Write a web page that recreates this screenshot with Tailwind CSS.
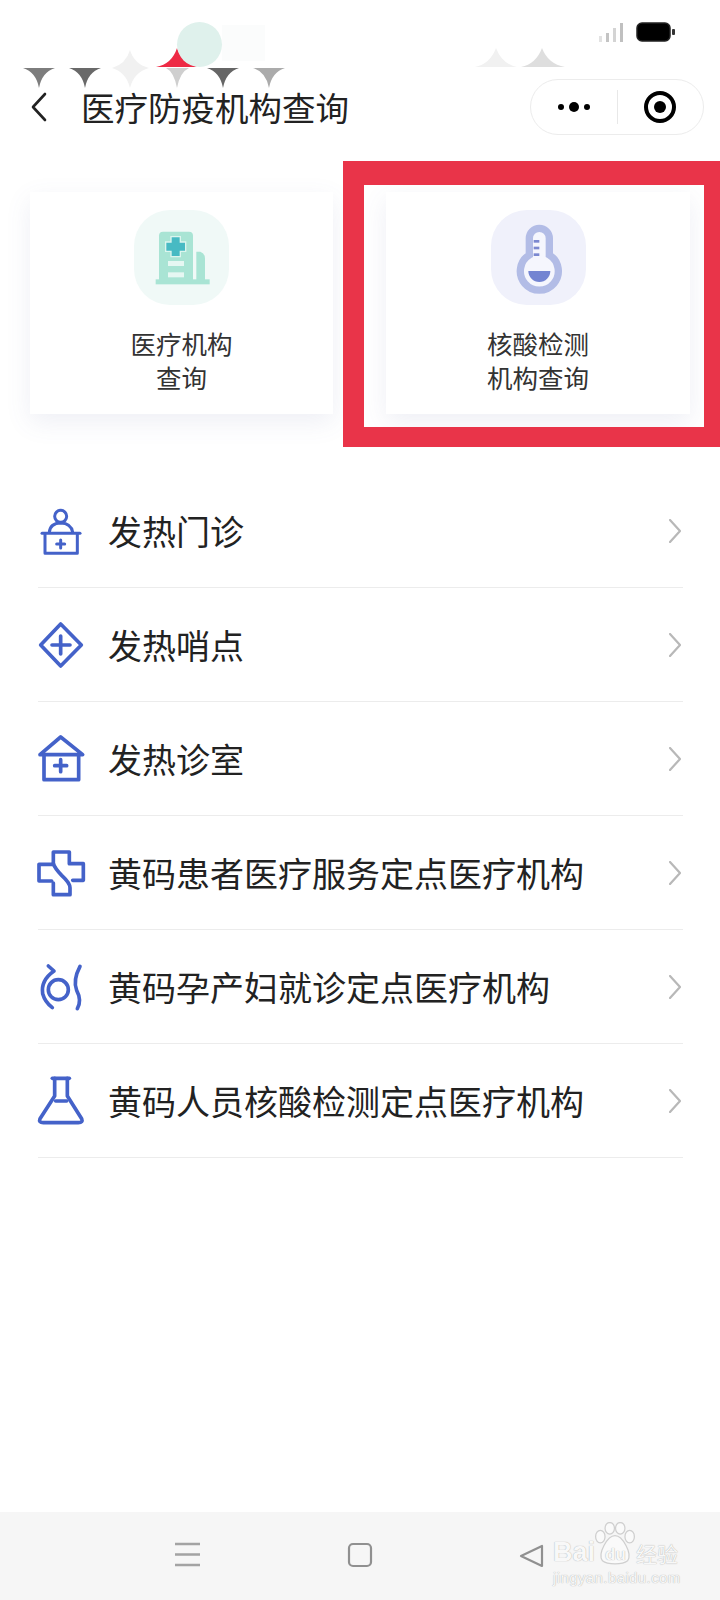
<!DOCTYPE html>
<html lang="zh">
<head>
<meta charset="utf-8">
<script src="https://cdn.jsdelivr.net/npm/@tailwindcss/browser@4"></script>
</head>
<body class="bg-white">
<div class="relative w-[720px] h-[1600px] overflow-hidden bg-white text-[#222] font-['Noto_Sans_CJK_SC','Noto_Sans',sans-serif]">

  <!-- status bar -->
  <div class="relative h-[79px] flex justify-end items-start pt-[22px] pr-[45px] gap-[12px]">
    <svg class="absolute left-0 top-0" width="720" height="90" viewBox="0 0 720 90">
      <rect x="222" y="25" width="43" height="36" fill="#fbfcfc"/>
      <path d="M23 68H55Q42 72 39 88Q36 72 23 68Z" fill="#7d7d7d"/>
      <path d="M69 68H101Q88 72 85 88Q82 72 69 68Z" fill="#696969"/>
      <path d="M112 68Q126 64 130 50Q134 64 149 68Q134 72 130 88Q126 72 112 68Z" fill="#f1f1f1"/>
      <path d="M156 67Q172 64 177 48Q181 62 197 67Z" fill="#ee2a45"/>
      <path d="M166 68H189Q180 72 177 88Q174 72 166 68Z" fill="#cfcfcf"/>
      <path d="M207 68H239Q226 72 223 88Q220 72 207 68Z" fill="#666"/>
      <path d="M253 68H285Q272 72 269 88Q266 72 253 68Z" fill="#ababab"/>
      <path d="M475 67Q490 64 496 48Q502 64 517 67Z" fill="#f1f1f1"/>
      <path d="M521 67Q536 64 542 48Q548 64 565 67Z" fill="#dedede"/>
      <circle cx="199.5" cy="44.5" r="22.5" fill="#dff1ec"/>
    </svg>
    <svg class="relative" width="26" height="21" viewBox="0 0 26 21">
      <rect x="1" y="14" width="3" height="6" fill="#e2e2e2"/>
      <rect x="8" y="11" width="3" height="9" fill="#c4c4c4"/>
      <rect x="15" y="6" width="3" height="14" fill="#d4d4d4"/>
      <rect x="22" y="1" width="3" height="19" fill="#c0c0c0"/>
    </svg>
    <svg class="relative" width="39" height="20" viewBox="0 0 39 20">
      <rect x="1" y="1" width="33" height="18" rx="5" fill="#000" stroke="#222" stroke-width="1.5"/>
      <rect x="36" y="7" width="3" height="6" rx="1" fill="#333"/>
    </svg>
  </div>

  <!-- nav bar -->
  <div class="relative h-[56px] flex items-center pl-[30px] pr-[16px]">
    <svg width="18" height="30" viewBox="0 0 18 30" fill="none" stroke="#222" stroke-width="2.6" stroke-linecap="round" stroke-linejoin="round">
      <path d="M15 2L3 15L15 28"/>
    </svg>
    <div class="ml-[33px] text-[33.5px] leading-none whitespace-nowrap">医疗防疫机构查询</div>
    <div class="ml-auto w-[174px] h-[56px] rounded-full border border-[#ececec] flex items-center bg-white">
      <div class="flex-1 flex items-center justify-center gap-[5px]">
        <span class="w-[6px] h-[6px] rounded-full bg-black"></span>
        <span class="w-[10px] h-[10px] rounded-full bg-black"></span>
        <span class="w-[6px] h-[6px] rounded-full bg-black"></span>
      </div>
      <div class="w-px h-[34px] bg-[#e8e8e8]"></div>
      <div class="flex-1 flex items-center justify-center">
        <div class="w-[32px] h-[32px] rounded-full border-[4px] border-black flex items-center justify-center">
          <span class="w-[12px] h-[12px] rounded-full bg-black"></span>
        </div>
      </div>
    </div>
  </div>

  <!-- cards -->
  <div class="flex mt-[57px] pl-[30px] gap-[53px]">
    <div class="w-[303px] h-[222px] bg-white shadow-[0_8px_24px_rgba(90,100,160,0.10)] flex flex-col items-center pt-[18px]">
      <div class="w-[95px] h-[95px] rounded-[36px] bg-[#f0f9f7]">
        <svg width="95" height="95" viewBox="45 30 285 285">
          <path d="M120 240V107Q120 95 132 95H210Q222 95 222 107V240Z" fill="#a9e4d4"/>
          <path d="M232 240V155H244Q258 160 258 175V240Z" fill="#a9e4d4"/>
          <rect x="110" y="238" width="162" height="15" fill="#a9e4d4"/>
          <path d="M158 112H182V128H198V152H182V168H158V152H142V128H158Z" fill="#47bac3" stroke="#dcf5ee" stroke-width="8" paint-order="stroke"/>
          <rect x="147" y="183" width="48" height="15" fill="#e6f7f2"/>
          <rect x="147" y="217" width="48" height="15" fill="#e6f7f2"/>
        </svg>
      </div>
      <div class="mt-[21px] text-[25.5px] leading-[34px] text-center text-[#333]">医疗机构<br>查询</div>
    </div>
    <div class="relative w-[304px] h-[222px] bg-white shadow-[0_8px_24px_rgba(90,100,160,0.10)] flex flex-col items-center pt-[18px]">
      <div class="w-[95px] h-[95px] rounded-[36px] bg-[#f0f1fb]">
        <svg width="95" height="95" viewBox="30 30 285 285">
          <path d="M145 165V115A30 30 0 0 1 205 115V165A57 57 0 1 1 145 165Z" fill="#f5f6fd" stroke="#b2bce6" stroke-width="22"/>
          <rect x="158" y="120" width="17" height="8" fill="#7b88d0"/>
          <rect x="158" y="140" width="17" height="8" fill="#7b88d0"/>
          <rect x="158" y="160" width="17" height="8" fill="#7b88d0"/>
          <path d="M142 213H208A33 33 0 0 1 142 213Z" fill="#7384d2"/>
        </svg>
      </div>
      <div class="mt-[21px] text-[25.5px] leading-[34px] text-center text-[#333]">核酸检测<br>机构查询</div>
      <div class="absolute left-[-43px] top-[-31px] w-[377px] h-[286px] border-solid border-[#e93449] border-t-[24px] border-l-[21px] border-r-[16px] border-b-[20px]"></div>
    </div>
  </div>

  <!-- list -->
  <div class="mt-[60px] ml-[38px] w-[645px]">
    <div class="h-[114px] flex items-center border-b border-[#ececec]">
      <svg class="-ml-[2px]" width="50" height="50" viewBox="48 46 150 150" fill="none" stroke="#4462c9" stroke-width="9" stroke-linecap="round" stroke-linejoin="round">
        <circle cx="122" cy="77" r="18"/>
        <path d="M88 125Q90 98 122 97Q154 98 158 125"/>
        <path d="M66 128H180"/>
        <path d="M75 130V188H172V130"/>
        <path d="M110 160H134M122 148V172"/>
      </svg>
      <div class="ml-[22px] text-[34px] leading-none whitespace-nowrap">发热门诊</div>
      <svg class="ml-auto mr-[2px]" width="12" height="24" viewBox="0 0 12 24" fill="none" stroke="#b8b8b8" stroke-width="2.2" stroke-linecap="round" stroke-linejoin="round"><path d="M1 1L11 12L1 23"/></svg>
    </div>
    <div class="h-[114px] flex items-center border-b border-[#ececec]">
      <svg class="-ml-[2px]" width="50" height="50" viewBox="48 390 150 150" fill="none" stroke="#4462c9" stroke-width="11" stroke-linecap="round" stroke-linejoin="round">
        <path d="M122 402L184 465L122 528L62 465Z"/>
        <path d="M96 465H150M122 438V492"/>
      </svg>
      <div class="ml-[22px] text-[34px] leading-none whitespace-nowrap">发热哨点</div>
      <svg class="ml-auto mr-[2px]" width="12" height="24" viewBox="0 0 12 24" fill="none" stroke="#b8b8b8" stroke-width="2.2" stroke-linecap="round" stroke-linejoin="round"><path d="M1 1L11 12L1 23"/></svg>
    </div>
    <div class="h-[114px] flex items-center border-b border-[#ececec]">
      <svg class="-ml-[2px]" width="50" height="50" viewBox="48 733 150 150" fill="none" stroke="#4462c9" stroke-width="11" stroke-linecap="round" stroke-linejoin="round">
        <path d="M60 795L122 742L188 795Z"/>
        <path d="M72 795V870H176V795"/>
        <path d="M104 828H140M122 810V846"/>
      </svg>
      <div class="ml-[22px] text-[34px] leading-none whitespace-nowrap">发热诊室</div>
      <svg class="ml-auto mr-[2px]" width="12" height="24" viewBox="0 0 12 24" fill="none" stroke="#b8b8b8" stroke-width="2.2" stroke-linecap="round" stroke-linejoin="round"><path d="M1 1L11 12L1 23"/></svg>
    </div>
    <div class="h-[114px] flex items-center border-b border-[#ececec]">
      <svg class="-ml-[2px]" width="50" height="50" viewBox="48 53 150 150" fill="none" stroke="#4462c9" stroke-width="11" stroke-linecap="round" stroke-linejoin="round">
        <path d="M95 152H57V102H100V65H148V100H190V150H158"/>
        <path d="M100 100Q105 115 125 135Q150 158 150 172V193H100V158"/>
      </svg>
      <div class="ml-[22px] text-[34px] leading-none whitespace-nowrap">黄码患者医疗服务定点医疗机构</div>
      <svg class="ml-auto mr-[2px]" width="12" height="24" viewBox="0 0 12 24" fill="none" stroke="#b8b8b8" stroke-width="2.2" stroke-linecap="round" stroke-linejoin="round"><path d="M1 1L11 12L1 23"/></svg>
    </div>
    <div class="h-[114px] flex items-center border-b border-[#ececec]">
      <svg class="-ml-[2px]" width="50" height="50" viewBox="48 395 150 150" fill="none" stroke="#4462c9" stroke-width="11" stroke-linecap="round" stroke-linejoin="round">
        <circle cx="115" cy="478" r="30"/>
        <path d="M85 407L102 422Q62 450 68 490Q75 515 97 532"/>
        <path d="M180 408Q158 450 170 480Q186 510 172 535"/>
      </svg>
      <div class="ml-[22px] text-[34px] leading-none whitespace-nowrap">黄码孕产妇就诊定点医疗机构</div>
      <svg class="ml-auto mr-[2px]" width="12" height="24" viewBox="0 0 12 24" fill="none" stroke="#b8b8b8" stroke-width="2.2" stroke-linecap="round" stroke-linejoin="round"><path d="M1 1L11 12L1 23"/></svg>
    </div>
    <div class="h-[114px] flex items-center border-b border-[#ececec]">
      <svg class="-ml-[2px]" width="50" height="50" viewBox="48 740 150 150" fill="none" stroke="#4462c9" stroke-width="11" stroke-linecap="round" stroke-linejoin="round">
        <path d="M97 747H148"/>
        <path d="M104 747V800L60 868Q55 880 70 880H175Q190 880 185 868L142 800V747"/>
        <path d="M107 815H140"/>
      </svg>
      <div class="ml-[22px] text-[34px] leading-none whitespace-nowrap">黄码人员核酸检测定点医疗机构</div>
      <svg class="ml-auto mr-[2px]" width="12" height="24" viewBox="0 0 12 24" fill="none" stroke="#b8b8b8" stroke-width="2.2" stroke-linecap="round" stroke-linejoin="round"><path d="M1 1L11 12L1 23"/></svg>
    </div>
  </div>

  <!-- system nav -->
  <div class="absolute left-0 bottom-0 w-full h-[88px] bg-[#f6f6f6]">
    <svg class="absolute left-[175px] top-[30px]" width="25" height="25" viewBox="0 0 25 25" stroke="#a3a3a3" stroke-width="2.5"><path d="M0 2H25M0 12.5H25M0 23H25"/></svg>
    <svg class="absolute left-[347px] top-[30px]" width="26" height="26" viewBox="0 0 26 26" fill="none" stroke="#909090" stroke-width="2.2"><rect x="2" y="2" width="22" height="22" rx="4"/></svg>
    <svg class="absolute left-[519px] top-[32px]" width="25" height="24" viewBox="0 0 25 24" fill="none" stroke="#909090" stroke-width="2.2" stroke-linejoin="round"><path d="M23 2V22L2 12Z"/></svg>
  </div>

  <!-- watermark -->
  <div class="absolute left-[553px] top-[1522px] w-[130px] h-[70px] text-[#f8f8f8] [text-shadow:0_0_1px_#999]">
    <svg class="absolute left-[41px] top-0" width="42" height="44" viewBox="0 0 40 42" fill="#fafafa" stroke="#cfcfcf" stroke-width="1.2">
      <ellipse cx="6" cy="14" rx="4.5" ry="6"/>
      <ellipse cx="15" cy="6" rx="4.5" ry="5.5"/>
      <ellipse cx="25" cy="6" rx="4.5" ry="5.5"/>
      <ellipse cx="34" cy="14" rx="4.5" ry="6"/>
      <path d="M20 13C27 13 37 30 32 37C27 41 13 41 8 37C3 30 13 13 20 13Z"/>
    </svg>
    <div class="absolute left-0 top-[17px] text-[27px] leading-[26px] font-['Liberation_Sans',sans-serif] font-bold">Bai</div>
    <div class="absolute left-[52px] top-[24px] text-[17px] leading-[17px] font-['Liberation_Sans',sans-serif] font-bold">du</div>
    <div class="absolute left-[83px] top-[20px] text-[21px] leading-[22px] whitespace-nowrap">经验</div>
    <div class="absolute left-0 top-[48px] text-[15px] leading-[16px] whitespace-nowrap tracking-[0.4px] font-['Liberation_Sans',sans-serif]">jingyan.baidu.com</div>
  </div>
</div>
</body>
</html>
